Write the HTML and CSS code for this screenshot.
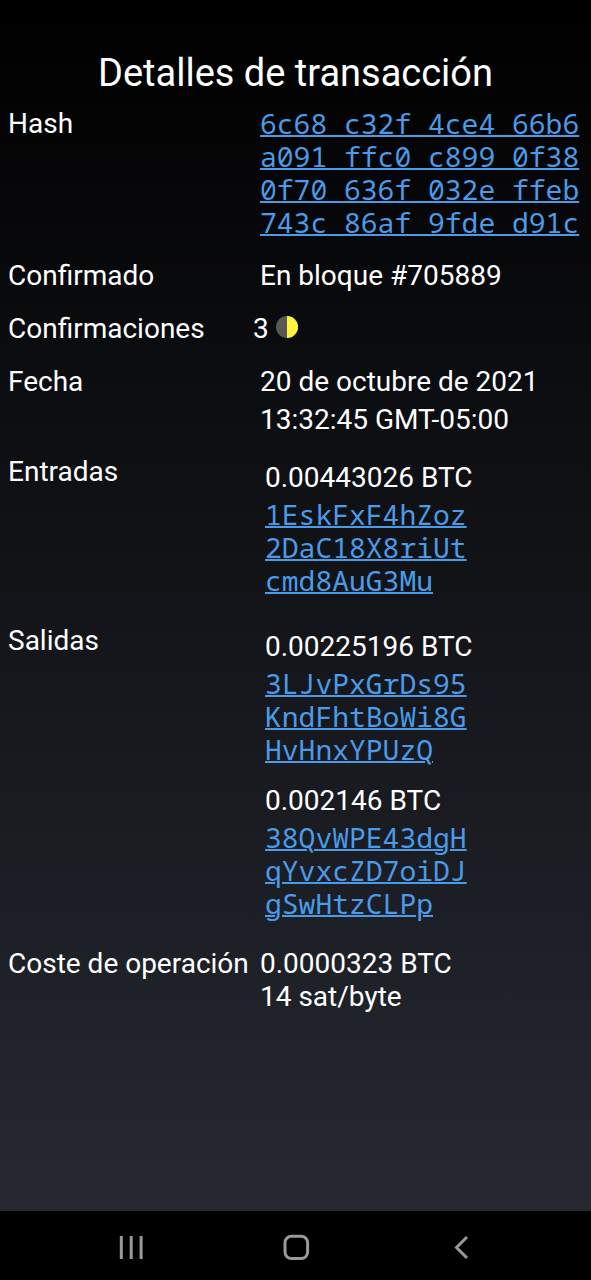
FILE: index.html
```html
<!DOCTYPE html>
<html lang="es">
<head>
<meta charset="utf-8">
<meta name="viewport" content="width=device-width, initial-scale=1">
<title>Detalles de transacción</title>
<link rel="stylesheet" href="styles.css">
</head>
<body>
<main class="screen">
  <h1 class="title">Detalles de transacción</h1>
  <dl class="details">
    <dt>Hash</dt>
    <dd class="hash"><a class="code" href="#hash">6c68 c32f 4ce4 66b6<br>a091 ffc0 c899 0f38<br>0f70 636f 032e ffeb<br>743c 86af 9fde d91c</a></dd>
    <dt>Confirmado</dt>
    <dd>En bloque #705889</dd>
    <dt>Confirmaciones</dt>
    <dd class="confirmations">3
      <svg class="progress" viewBox="0 0 24 24" aria-hidden="true"><circle cx="12" cy="12" r="11" fill="#5a5757"/><path d="M12 1a11 11 0 0 1 0 22z" fill="#fff440"/></svg>
    </dd>
    <dt>Fecha</dt>
    <dd class="date">20 de octubre de 2021<br>13:32:45 GMT-05:00</dd>
    <dt>Entradas</dt>
    <dd class="entries">
      <div class="entry"><span class="amount">0.00443026 BTC</span><a class="code" href="#in">1EskFxF4hZoz<br>2DaC18X8riUt<br>cmd8AuG3Mu</a></div>
    </dd>
    <dt>Salidas</dt>
    <dd class="entries">
      <div class="entry"><span class="amount">0.00225196 BTC</span><a class="code" href="#out1">3LJvPxGrDs95<br>KndFhtBoWi8G<br>HvHnxYPUzQ</a></div>
      <div class="entry"><span class="amount">0.002146 BTC</span><a class="code" href="#out2">38QvWPE43dgH<br>qYvxcZD7oiDJ<br>gSwHtzCLPp</a></div>
    </dd>
    <dt>Coste de operación</dt>
    <dd class="fee">0.0000323 BTC<br>14 sat/byte</dd>
  </dl>
</main>
<nav class="navbar" aria-label="Sistema">
  <button class="nav-button" aria-label="Recientes"><svg viewBox="0 0 32 32"><path d="M6.3 5v23M16.2 5v23M26.1 5v23"/></svg></button>
  <button class="nav-button" aria-label="Inicio"><svg viewBox="0 0 32 32"><rect x="5" y="5.2" width="22.6" height="22.4" rx="6.5"/></svg></button>
  <button class="nav-button" aria-label="Atrás"><svg viewBox="0 0 32 32"><path d="M22 6L11.5 16.5L22 27"/></svg></button>
</nav>
</body>
</html>
```
FILE: styles.css
```css
* {
  box-sizing: border-box;
}

body {
  margin: 0;
  min-height: 100vh;
  display: flex;
  flex-direction: column;
  background: #000;
  color: #fff;
  font: 28px/33px Roboto, sans-serif;
}

.screen {
  flex: 1;
  padding: 49px 8px 24px;
  background: linear-gradient(#000, #262932);
}

.title {
  margin: 0;
  font-size: 38px;
  line-height: 48px;
  font-weight: 400;
  text-align: center;
}

.details {
  display: grid;
  grid-template-columns: 252px minmax(0, 1fr);
  row-gap: 20px;
  margin: 10px 0 0;
}

dt {
  white-space: nowrap;
}

dd {
  margin: 0;
}

.code {
  display: block;
  color: #4a9be8;
  font-family: "Noto Sans Mono", "DejaVu Sans Mono", monospace;
  text-decoration-thickness: 2px;
  white-space: nowrap;
}

.confirmations {
  display: flex;
  align-items: flex-start;
  gap: 6px;
  margin-left: -7px;
}

.progress {
  width: 24px;
  height: 24px;
  margin-top: 3px;
}

.date {
  line-height: 38px;
  margin: -2px 0 -4px;
}

.entries {
  display: grid;
  gap: 16px;
  padding: 4px 5px 7px;
}

.amount {
  display: block;
  line-height: 38px;
  margin-bottom: 1px;
}

.navbar {
  display: flex;
  height: 69px;
  padding: 3px 48px 0;
  background: #000;
}

.nav-button {
  flex: 1;
  padding: 0;
  border: 0;
  background: none;
}

.nav-button svg {
  display: block;
  width: 32px;
  height: 32px;
  margin: 0 auto;
  fill: none;
  stroke: #999;
  stroke-width: 3;
}
```
